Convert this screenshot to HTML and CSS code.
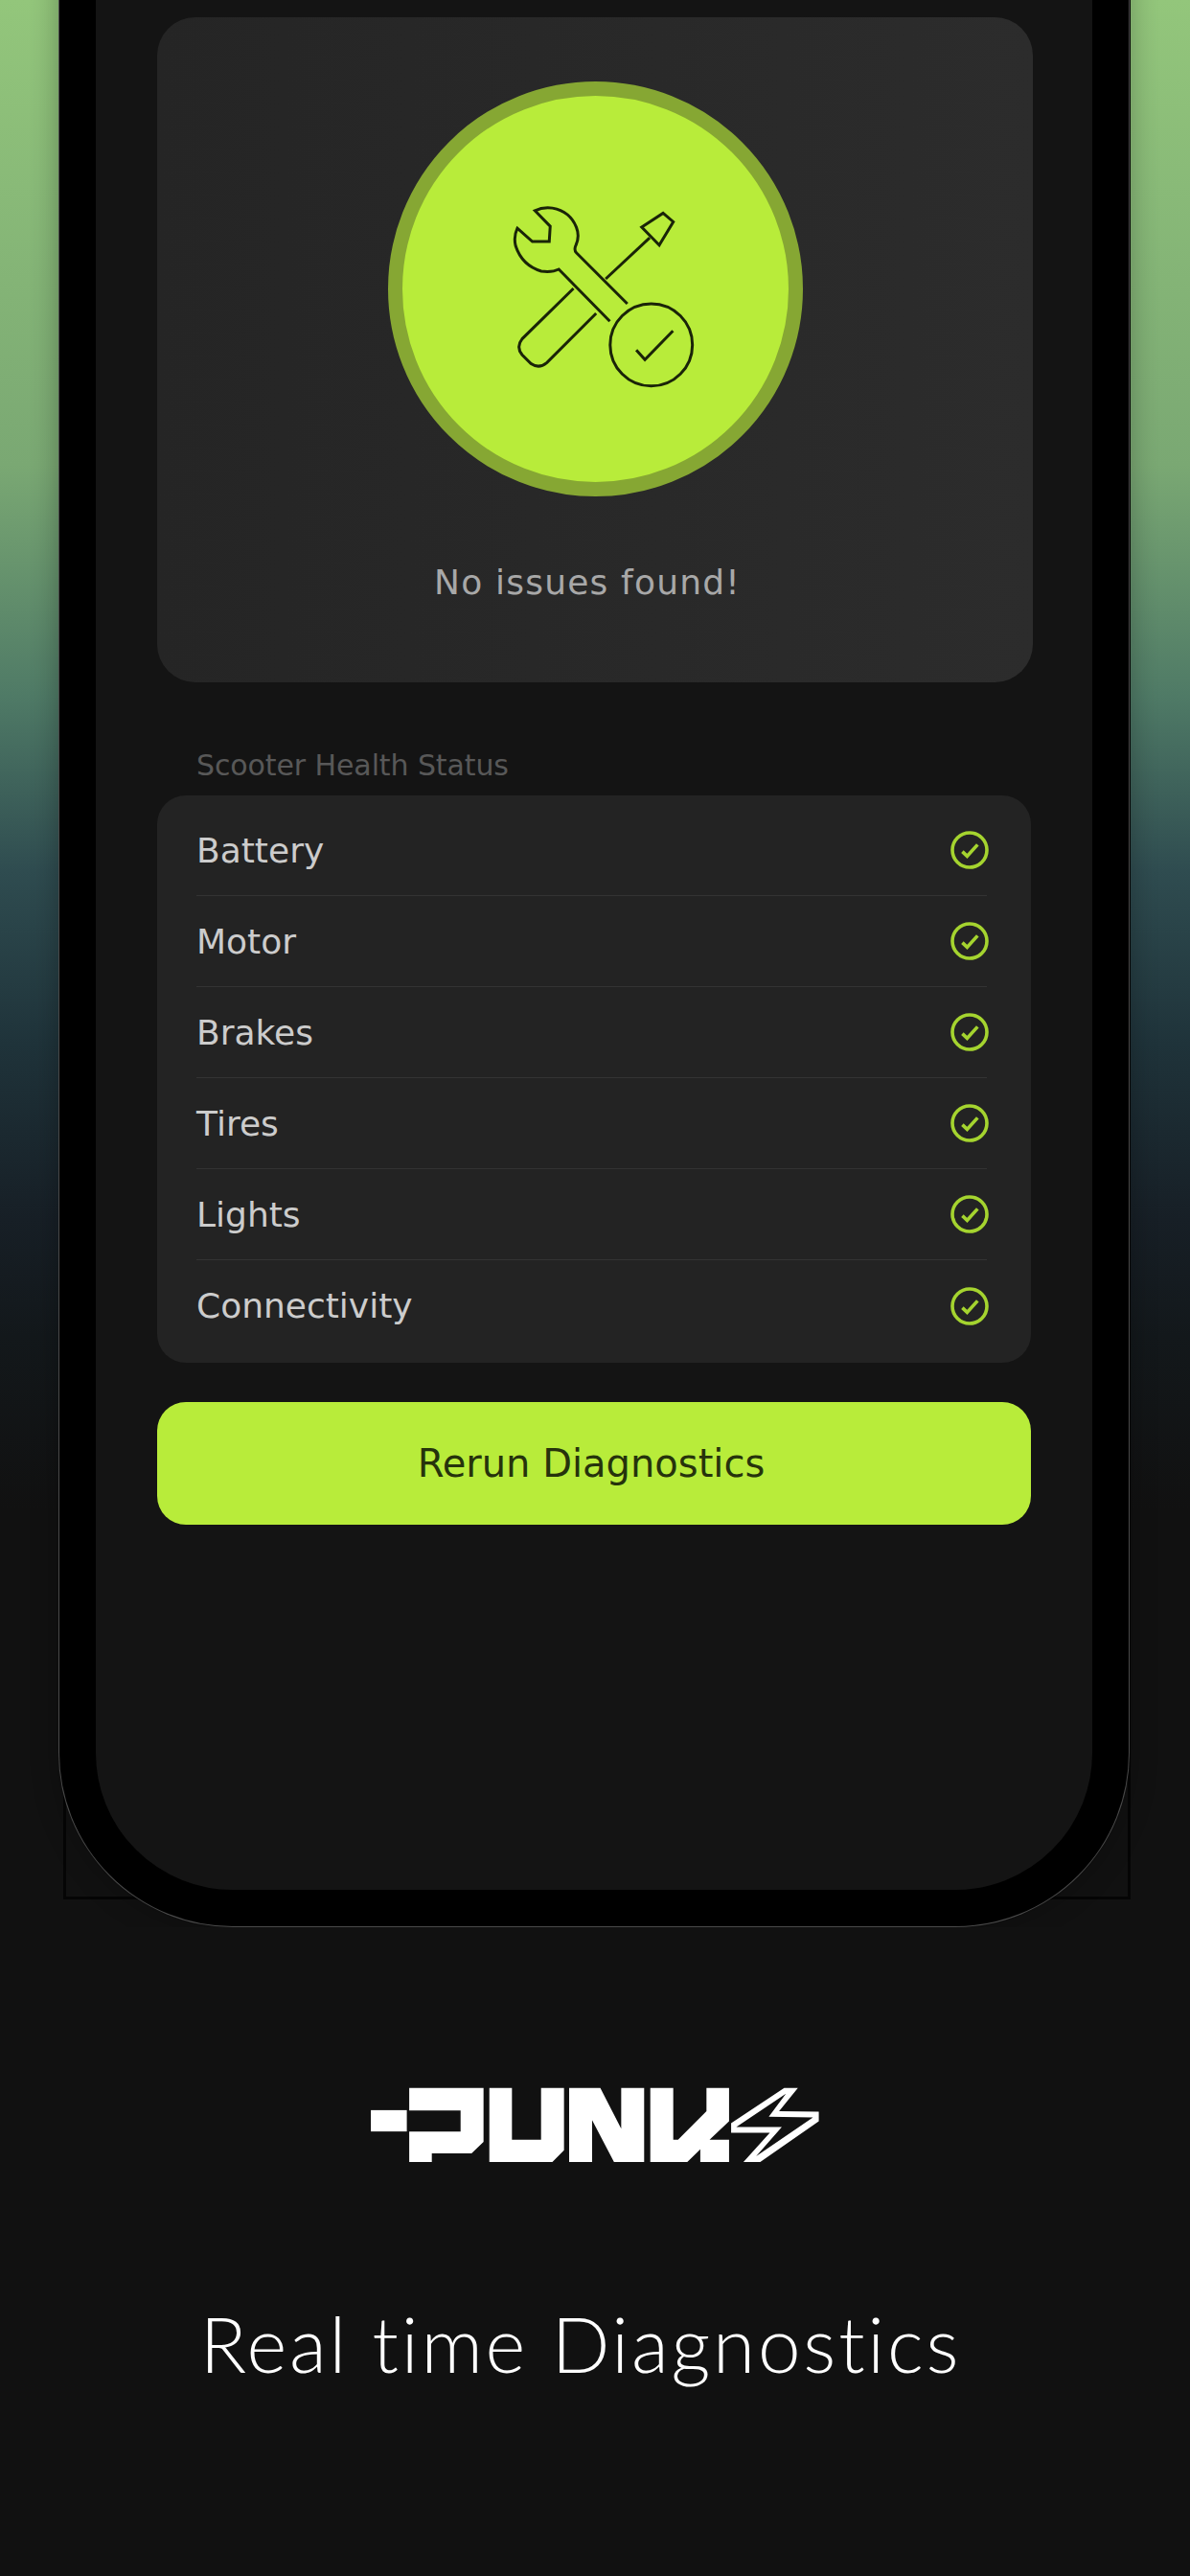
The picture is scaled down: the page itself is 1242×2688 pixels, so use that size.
FILE: index.html
```html
<!DOCTYPE html>
<html lang="en">
<head>
    <meta charset="UTF-8">
    <meta name="viewport" content="width=device-width, initial-scale=1.0">
    <title>Punk - Real time Diagnostics</title>
    <link rel="stylesheet" href="styles.css">
</head>
<body>
    <svg class="icon-defs" width="0" height="0">
        <symbol id="check-circle" viewBox="0 0 40 40">
            <circle cx="20" cy="20" r="18" fill="none" stroke="currentColor" stroke-width="3.6"/>
            <path d="M12.4 21.6 L17.4 26.4 L28.3 14.4" fill="none" stroke="currentColor" stroke-width="3.6"/>
        </symbol>
    </svg>
    <section class="hero">
        <div class="backdrop-frame"></div>
        <div class="phone">
            <div class="screen">
                <div class="result-card">
                    <div class="result-badge">
                        <svg class="tools-icon" viewBox="415 425 610 600" fill="none" stroke="#1a2408" stroke-width="9">
                            <path d="M820 770 L660 610 Q653 603 657 590 Q672 560 660 530 Q640 480 585 470 Q555 466 530 478 L578 527 L575 575 L522 575 L475 533 Q462 560 470 590 Q490 650 550 668 Q585 672 605 662 L765 825"/>
                            <path d="M651 722 L490 880 Q470 905 490 930 L518 958 Q543 975 567 955 L722 800"/>
                            <path d="M752 692 L890 563"/>
                            <path d="M865 530 L932 486 L964 513 L920 586 Z"/>
                            <circle cx="895" cy="899" r="129"/>
                            <path d="M848 915 L875 945 L963 855"/>
                        </svg>
                    </div>
                    <p class="result-text">No issues found!</p>
                </div>

                <div class="status-label">Scooter Health Status</div>
                <div class="status-list">
                    <div class="status-row"><span>Battery</span><svg class="check"><use href="#check-circle"/></svg></div>
                    <div class="status-row"><span>Motor</span><svg class="check"><use href="#check-circle"/></svg></div>
                    <div class="status-row"><span>Brakes</span><svg class="check"><use href="#check-circle"/></svg></div>
                    <div class="status-row"><span>Tires</span><svg class="check"><use href="#check-circle"/></svg></div>
                    <div class="status-row"><span>Lights</span><svg class="check"><use href="#check-circle"/></svg></div>
                    <div class="status-row"><span>Connectivity</span><svg class="check"><use href="#check-circle"/></svg></div>
                </div>

                <button class="rerun-button">Rerun Diagnostics</button>
            </div>
        </div>
    </section>

    <footer class="caption">
        <svg class="logo" viewBox="130 115 1315 238" preserveAspectRatio="none" fill="#fff">
            <rect x="133" y="187" width="105" height="67"/>
            <polygon points="245,117 462,117 462,287 427,323 311,323 311,350 245,350 245,254 395,254 395,188 245,188"/>
            <polygon points="479,117 545,117 545,280 630,280 630,117 697,117 697,313 663,350 479,350"/>
            <polygon points="712,117 803,117 864,245 864,117 931,117 931,350 843,350 779,218 779,350 712,350"/>
            <polygon points="949,117 1016,117 1016,280 1030,280 1113,190 1113,117 1179,117 1179,222 1122,280 1179,280 1179,350 1095,350 1095,310 1057,350 949,350"/>
            <path fill-rule="evenodd" d="M1340 117 L1380 117 L1325 190 L1441 192 L1441 222 L1270 350 L1221 350 L1298 258 L1185 258 L1185 228 Z M1345 135 L1200 240 L1333 240 L1258 332 L1424 210 L1295 208 Z"/>
        </svg>
        <h1 class="headline">Real time Diagnostics</h1>
    </footer>
</body>
</html>
```

FILE: styles.css
```css
body {
    margin: 0;
    background: #111111;
    color: #ffffff;
    font-family: "DejaVu Sans", sans-serif;
}

.icon-defs {
    position: absolute;
}

.hero {
    position: relative;
    height: 2011px;
    overflow: hidden;
    background: linear-gradient(#93c67b 0, #7aa873 485px, #4f7a66 727px, #2f4c50 909px, #1f333a 1090px, #171f26 1273px, #13181b 1394px, #111111 1575px);
}

.backdrop-frame {
    position: absolute;
    left: 66px;
    right: 62px;
    top: 0;
    bottom: 29px;
    background: #111111;
    border: 3px solid #050505;
}

.phone {
    position: relative;
    box-sizing: border-box;
    width: 1116px;
    height: 2070px;
    margin: -60px 0 0 62px;
    background: #141414;
    border: 38px solid #000000;
    border-radius: 0 0 181px 181px;
    box-shadow: 0 0 0 1px #4a4a4a, 0 0 30px rgba(0, 0, 0, 0.3);
}

.screen {
    box-sizing: border-box;
    height: 100%;
    padding: 40px 64px 0 64px;
    border-radius: 0 0 143px 143px;
}

.result-card {
    display: flex;
    flex-direction: column;
    align-items: center;
    box-sizing: border-box;
    height: 694px;
    margin-right: -2px;
    padding-top: 67px;
    background: linear-gradient(90deg, #252525, #2c2c2c);
    border-radius: 40px;
}

.result-badge {
    display: flex;
    align-items: center;
    justify-content: center;
    box-sizing: border-box;
    width: 433px;
    height: 433px;
    background: #b8ec3a;
    border: 15px solid #86a733;
    border-radius: 50%;
}

.tools-icon {
    width: 203px;
    height: 200px;
    overflow: visible;
}

.result-text {
    margin: 68px 16px 0 0;
    font-size: 36px;
    line-height: 44px;
    letter-spacing: 1.2px;
    color: #a8a8a8;
}

.status-label {
    margin: 69px 0 13px 41px;
    font-size: 30px;
    line-height: 36px;
    letter-spacing: -0.1px;
    color: #585858;
}

.status-list {
    padding: 10px 46px 12px 41px;
    background: #232323;
    border-radius: 30px;
}

.status-row {
    display: flex;
    align-items: center;
    justify-content: space-between;
    box-sizing: border-box;
    height: 95px;
    font-size: 36px;
    color: #cccccc;
    border-bottom: 1px solid #333333;
}

.status-row:last-child {
    border-bottom: none;
}

.check {
    width: 40px;
    height: 40px;
    margin-right: -2px;
    color: #a5d42f;
}

.rerun-button {
    display: block;
    width: 100%;
    height: 128px;
    margin-top: 41px;
    padding: 0 6px 0 0;
    background: #b8ec3a;
    color: #26330c;
    border: none;
    border-radius: 30px;
    font-family: inherit;
    font-size: 40px;
}

.caption {
    display: flex;
    flex-direction: column;
    align-items: center;
    padding-top: 167px;
}

.logo {
    display: block;
    width: 470px;
    height: 79px;
}

.headline {
    margin: 141px 30px 0 0;
    font-family: "Lato", sans-serif;
    font-size: 80px;
    line-height: 94px;
    font-weight: 300;
    letter-spacing: 2.8px;
    font-variant-ligatures: none;
    color: #ffffff;
}
```
